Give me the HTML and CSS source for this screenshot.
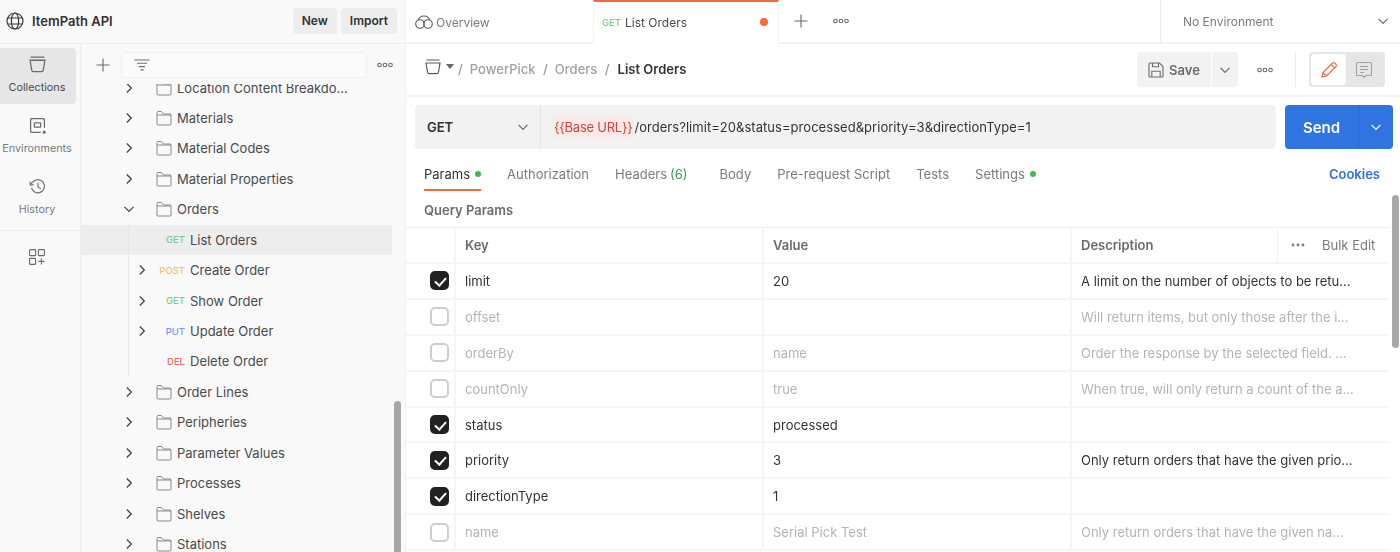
FILE: index.html
```html
<!DOCTYPE html>
<html lang="en">
  <head>
    <meta charset="UTF-8" />
    <title>List Orders</title>
    <link rel="stylesheet" href="styles.css">
  </head>
  <body>
    <svg class="icon-defs" width="0" height="0">
      <symbol id="i-folder" viewBox="0 0 16 16" fill="none" stroke="currentColor">
        <path d="M1 14V2.500A1 1 0 0 1 2 1.500h3.500L7.500 4H14a1 1 0 0 1 1 1v9a1 1 0 0 1-1 1H2a1 1 0 0 1-1-1zM1 5h14"/>
      </symbol>
      <symbol id="i-right" viewBox="0 0 14 14" fill="none" stroke="currentColor" stroke-width="1.300">
        <path d="M4.800 2.500 9.300 7l-4.500 4.500"/>
      </symbol>
      <symbol id="i-down" viewBox="0 0 14 14" fill="none" stroke="currentColor" stroke-width="1.200">
        <path d="M2.500 4.800 7 9.300l4.500-4.500"/>
      </symbol>
      <symbol id="i-more" viewBox="0 0 16 6" fill="none" stroke="currentColor" stroke-width="1.100">
        <circle cx="2.500" cy="3" r="1.800"/><circle cx="8" cy="3" r="1.800"/><circle cx="13.500" cy="3" r="1.800"/>
      </symbol>
      <symbol id="i-plus" viewBox="0 0 14 14" fill="none" stroke="currentColor" stroke-width="1.100">
        <path d="M7 .5v13M.5 7h13"/>
      </symbol>
      <symbol id="i-bucket" viewBox="0 0 16 16" fill="none" stroke="currentColor" stroke-width="1.200">
        <path d="M1.500 1h13M1 4h14l-1.600 9.500a1.500 1.500 0 0 1-1.500 1.200H4.100a1.500 1.500 0 0 1-1.500-1.200z"/>
      </symbol>
    </svg>

    <div class="app">
      <aside class="sidebar">
        <header class="workspace">
          <svg class="workspace-globe" viewBox="0 0 18 18" fill="none" stroke="currentColor" stroke-width="1.200">
            <circle cx="9" cy="9" r="8"/>
            <ellipse cx="9" cy="9" rx="3.600" ry="8"/>
            <path d="M1.700 6h14.600M1.700 12h14.600"/>
          </svg>
          <span class="workspace-name">ItemPath API</span>
          <button class="workspace-btn">New</button>
          <button class="workspace-btn">Import</button>
        </header>

        <div class="sidebar-body">
          <nav class="rail">
            <div class="rail-item active">
              <svg class="rail-icon" viewBox="0 0 16 16"><use href="#i-bucket"/></svg>
              <span>Collections</span>
            </div>
            <div class="rail-item">
              <svg class="rail-icon" viewBox="0 0 16 16" fill="none" stroke="currentColor" stroke-width="1.200">
                <path d="M14.500 10V2.500a1 1 0 0 0-1-1h-11a1 1 0 0 0-1 1v11a1 1 0 0 0 1 1H11"/>
                <rect x="5" y="5.500" width="6" height="4" rx=".5"/>
                <rect x="13" y="13" width="2.600" height="2.600" fill="currentColor" stroke="none"/>
              </svg>
              <span>Environments</span>
            </div>
            <div class="rail-item">
              <svg class="rail-icon" viewBox="0 0 18 18" fill="none" stroke="currentColor" stroke-width="1.200">
                <path d="M2.600 10.500A7 7 0 1 0 4 4.200L1.500 7"/>
                <path d="M1 3.800 1.500 7.500l3.600-.4"/>
                <path d="M9.500 5v4.500l3 2"/>
              </svg>
              <span>History</span>
            </div>
            <div class="rail-divider"></div>
            <svg class="rail-apps" viewBox="0 0 16 16" fill="none" stroke="currentColor" stroke-width="1.100">
              <rect x=".6" y=".6" width="6" height="6" rx=".6"/>
              <rect x="9.400" y=".6" width="6" height="6" rx=".6"/>
              <rect x=".6" y="9.400" width="6" height="6" rx=".6"/>
              <path d="M12.400 9.400v6M9.400 12.400h6"/>
            </svg>
          </nav>

          <section class="collections">
            <div class="collections-toolbar">
              <svg class="toolbar-plus"><use href="#i-plus"/></svg>
              <div class="filter-box">
                <svg class="filter-icon" viewBox="0 0 16 12" fill="none" stroke="currentColor" stroke-width="1.100">
                  <path d="M.5 1h15M3 4.300h10M5 7.600h6M6.500 10.900h3"/>
                </svg>
              </div>
              <svg class="more-icon"><use href="#i-more"/></svg>
            </div>

            <div class="tree-scroll">
              <ul class="tree">
                <li class="folder-row"><svg class="chev"><use href="#i-right"/></svg><svg class="folder"><use href="#i-folder"/></svg><span>Location Content Breakdo...</span></li>
                <li class="folder-row"><svg class="chev"><use href="#i-right"/></svg><svg class="folder"><use href="#i-folder"/></svg><span>Materials</span></li>
                <li class="folder-row"><svg class="chev"><use href="#i-right"/></svg><svg class="folder"><use href="#i-folder"/></svg><span>Material Codes</span></li>
                <li class="folder-row"><svg class="chev"><use href="#i-right"/></svg><svg class="folder"><use href="#i-folder"/></svg><span>Material Properties</span></li>
                <li class="folder-row"><svg class="chev"><use href="#i-down"/></svg><svg class="folder"><use href="#i-folder"/></svg><span>Orders</span></li>
                <li>
                  <ul class="tree-group">
                    <li class="request-row selected"><span class="chev-slot"></span><span class="method get">GET</span><span>List Orders</span></li>
                    <li class="request-row"><svg class="chev"><use href="#i-right"/></svg><span class="method post">POST</span><span>Create Order</span></li>
                    <li class="request-row"><svg class="chev"><use href="#i-right"/></svg><span class="method get">GET</span><span>Show Order</span></li>
                    <li class="request-row"><svg class="chev"><use href="#i-right"/></svg><span class="method put">PUT</span><span>Update Order</span></li>
                    <li class="request-row"><span class="chev-slot"></span><span class="method del">DEL</span><span>Delete Order</span></li>
                  </ul>
                </li>
                <li class="folder-row"><svg class="chev"><use href="#i-right"/></svg><svg class="folder"><use href="#i-folder"/></svg><span>Order Lines</span></li>
                <li class="folder-row"><svg class="chev"><use href="#i-right"/></svg><svg class="folder"><use href="#i-folder"/></svg><span>Peripheries</span></li>
                <li class="folder-row"><svg class="chev"><use href="#i-right"/></svg><svg class="folder"><use href="#i-folder"/></svg><span>Parameter Values</span></li>
                <li class="folder-row"><svg class="chev"><use href="#i-right"/></svg><svg class="folder"><use href="#i-folder"/></svg><span>Processes</span></li>
                <li class="folder-row"><svg class="chev"><use href="#i-right"/></svg><svg class="folder"><use href="#i-folder"/></svg><span>Shelves</span></li>
                <li class="folder-row"><svg class="chev"><use href="#i-right"/></svg><svg class="folder"><use href="#i-folder"/></svg><span>Stations</span></li>
              </ul>
              <div class="tree-scrollbar"></div>
            </div>
          </section>
        </div>
      </aside>

      <main class="main">
        <div class="tabbar">
          <div class="tab overview">
            <svg class="overview-icon" viewBox="0 0 18 14" fill="none" stroke="currentColor" stroke-width="1.100">
              <circle cx="5" cy="9" r="4.300"/>
              <circle cx="13" cy="9" r="4.300"/>
              <path d="M3.300 5.200A5.800 5.800 0 0 1 9 1a5.800 5.800 0 0 1 5.700 4.200"/>
            </svg>
            <span>Overview</span>
          </div>
          <div class="tab current">
            <span class="method get">GET</span>
            <span class="tab-title">List Orders</span>
            <span class="tab-dot"></span>
          </div>
          <svg class="tabbar-plus"><use href="#i-plus"/></svg>
          <svg class="more-icon tabbar-more"><use href="#i-more"/></svg>
          <div class="env-select">
            <span>No Environment</span>
            <svg class="small-chev"><use href="#i-down"/></svg>
          </div>
        </div>

        <div class="request-head">
          <div class="crumbs">
            <svg class="crumb-bucket" viewBox="0 0 16 16"><use href="#i-bucket"/></svg>
            <span class="crumb-caret"></span>
            <span class="crumb-sep">/</span>
            <span class="crumb">PowerPick</span>
            <span class="crumb-sep">/</span>
            <span class="crumb">Orders</span>
            <span class="crumb-sep">/</span>
            <span class="crumb-current">List Orders</span>
          </div>

          <div class="head-actions">
            <button class="save-btn">
              <svg viewBox="0 0 16 16" fill="none" stroke="currentColor" stroke-width="1.100">
                <path d="M1 2.200A1.200 1.200 0 0 1 2.200 1h9.300L15 4.500v9.300a1.200 1.200 0 0 1-1.200 1.200H2.200A1.200 1.200 0 0 1 1 13.800z"/>
                <path d="M4.500 1v3.800h6V1M3.800 15V9.300h8.400V15"/>
              </svg>
              Save
            </button>
            <button class="save-menu"><svg class="small-chev"><use href="#i-down"/></svg></button>
            <svg class="more-icon head-more"><use href="#i-more"/></svg>
            <div class="head-divider"></div>
            <div class="mode-toggle">
              <div class="mode-btn on">
                <svg viewBox="0 0 18 18" fill="none" stroke="#f26b3a" stroke-width="1.100">
                  <path d="M2 16l1-4.500L12.500 2a1.500 1.500 0 0 1 2.100 0l1.400 1.400a1.500 1.500 0 0 1 0 2.100L6.500 15z"/>
                  <path d="M11 3.500 14.500 7M3 11.500 6.500 15"/>
                </svg>
              </div>
              <div class="mode-btn">
                <svg viewBox="0 0 18 18" fill="none" stroke="#a0a0a0" stroke-width="1.100">
                  <path d="M2.500 1.500h13a1 1 0 0 1 1 1v11a1 1 0 0 1-1 1H11l-2 2-2-2H2.500a1 1 0 0 1-1-1v-11a1 1 0 0 1 1-1z"/>
                  <path d="M5 5.500h8M5 8.500h8M5 11.500h4"/>
                </svg>
              </div>
            </div>
          </div>
        </div>

        <div class="url-row">
          <div class="url-box">
            <div class="url-method">
              <span>GET</span>
              <svg class="small-chev"><use href="#i-down"/></svg>
            </div>
            <div class="url-text"><span class="url-var">{{Base URL}}</span>/orders?limit=20&amp;status=processed&amp;priority=3&amp;directionType=1</div>
          </div>
          <div class="send-btn">
            <span class="send-label">Send</span>
            <span class="send-menu"><svg class="small-chev"><use href="#i-down"/></svg></span>
          </div>
        </div>

        <div class="req-tabs">
          <span class="req-tab active">Params<i class="status-dot"></i></span>
          <span class="req-tab">Authorization</span>
          <span class="req-tab">Headers <em>(6)</em></span>
          <span class="req-tab spaced">Body</span>
          <span class="req-tab">Pre-request Script</span>
          <span class="req-tab">Tests</span>
          <span class="req-tab">Settings<i class="status-dot"></i></span>
          <span class="cookies">Cookies</span>
        </div>

        <div class="query-title">Query Params</div>

        <div class="params">
          <div class="param-row header">
            <div class="cell"></div>
            <div class="cell">Key</div>
            <div class="cell">Value</div>
            <div class="cell desc-head">
              <span>Description</span>
              <div class="bulk">
                <svg viewBox="0 0 14 4" fill="currentColor"><circle cx="2" cy="2" r="1.400"/><circle cx="7" cy="2" r="1.400"/><circle cx="12" cy="2" r="1.400"/></svg>
                <span>Bulk Edit</span>
              </div>
            </div>
          </div>

          <div class="param-row">
            <div class="cell"><span class="check on"></span></div>
            <div class="cell">limit</div>
            <div class="cell">20</div>
            <div class="cell">A limit on the number of objects to be retu...</div>
          </div>
          <div class="param-row off">
            <div class="cell"><span class="check"></span></div>
            <div class="cell">offset</div>
            <div class="cell"></div>
            <div class="cell">Will return items, but only those after the i...</div>
          </div>
          <div class="param-row off">
            <div class="cell"><span class="check"></span></div>
            <div class="cell">orderBy</div>
            <div class="cell">name</div>
            <div class="cell">Order the response by the selected field. ...</div>
          </div>
          <div class="param-row off">
            <div class="cell"><span class="check"></span></div>
            <div class="cell">countOnly</div>
            <div class="cell">true</div>
            <div class="cell">When true, will only return a count of the a...</div>
          </div>
          <div class="param-row">
            <div class="cell"><span class="check on"></span></div>
            <div class="cell">status</div>
            <div class="cell">processed</div>
            <div class="cell"></div>
          </div>
          <div class="param-row">
            <div class="cell"><span class="check on"></span></div>
            <div class="cell">priority</div>
            <div class="cell">3</div>
            <div class="cell">Only return orders that have the given prio...</div>
          </div>
          <div class="param-row">
            <div class="cell"><span class="check on"></span></div>
            <div class="cell">directionType</div>
            <div class="cell">1</div>
            <div class="cell"></div>
          </div>
          <div class="param-row off">
            <div class="cell"><span class="check"></span></div>
            <div class="cell">name</div>
            <div class="cell">Serial Pick Test</div>
            <div class="cell">Only return orders that have the given na...</div>
          </div>
        </div>
        <div class="main-scrollbar"></div>
      </main>
    </div>
  </body>
</html>
```

FILE: styles.css
```css
* {
  box-sizing: border-box;
}

body {
  font-family: Inter, "Liberation Sans", sans-serif;
  font-size: 13px;
  margin: 0;
  width: 1400px;
  height: 552px;
  overflow: hidden;
  background-color: #ffffff;
  color: #212121;
}

ul {
  list-style: none;
  margin: 0;
  padding: 0;
}

button {
  font-family: inherit;
  border: none;
  cursor: pointer;
}

.icon-defs {
  position: absolute;
}

.app {
  display: flex;
  height: 552px;
  filter: blur(0.5px);
}

/* Left sidebar */

.sidebar {
  width: 406px;
  flex-shrink: 0;
  display: flex;
  flex-direction: column;
  background-color: #f9f9f9;
  border-right: 1px solid #f0f0f0;
}

.workspace {
  height: 44px;
  flex-shrink: 0;
  display: flex;
  align-items: center;
  gap: 4px;
  padding: 0 8px 2px 6px;
  border-bottom: 1px solid #eeeeee;
}

.workspace-globe {
  width: 18px;
  height: 18px;
  color: #3a3a3a;
  margin-right: 4px;
}

.workspace-name {
  font-weight: 600;
  color: #333333;
  margin-right: auto;
}

.workspace-btn {
  height: 26px;
  padding: 0 9px;
  border-radius: 4px;
  background-color: #ededed;
  color: #333333;
  font-size: 12px;
  font-weight: 600;
}

.sidebar-body {
  flex: 1;
  display: flex;
  min-height: 0;
}

.rail {
  width: 81px;
  flex-shrink: 0;
  padding: 4px 4px 0 0;
  border-right: 1px solid #eeeeee;
  display: flex;
  flex-direction: column;
  gap: 5px;
}

.rail-item {
  height: 56px;
  display: flex;
  flex-direction: column;
  align-items: center;
  justify-content: center;
  gap: 8px;
  padding: 0 2px 2px 0;
  font-size: 10.8px;
  color: #7a7a7a;
  border-radius: 0 4px 4px 0;
}

.rail-item.active {
  background-color: #e6e6e6;
  color: #4a4a4a;
}

.rail-icon {
  width: 17px;
  height: 17px;
  color: #6b6b6b;
}

.rail-divider {
  height: 1px;
  margin: -1px -4px 0 0;
  background-color: #eeeeee;
}

.rail-apps {
  width: 16px;
  height: 16px;
  margin: 13px 0 0 29px;
  color: #6b6b6b;
}

.collections {
  flex: 1;
  min-width: 0;
  display: flex;
  flex-direction: column;
}

.collections-toolbar {
  height: 40px;
  flex-shrink: 0;
  display: flex;
  align-items: center;
  padding: 2px 0 0 15px;
}

.toolbar-plus {
  width: 14px;
  height: 14px;
  color: #666666;
  margin-right: 11px;
}

.filter-box {
  width: 246px;
  height: 26px;
  display: flex;
  align-items: center;
  padding-left: 12px;
  background-color: #fbfbfb;
  border: 1px solid #f0f0f0;
  border-radius: 3px;
  margin-right: 10px;
}

.filter-icon {
  width: 16px;
  height: 14px;
  color: #6b6b6b;
}

.more-icon {
  width: 16px;
  height: 6px;
  color: #6b6b6b;
}

.tree-scroll {
  flex: 1;
  position: relative;
  overflow: hidden;
}

.tree {
  width: 311px;
  margin-top: -11.7px;
  color: #4a4a4a;
}

.folder-row,
.request-row {
  height: 30.45px;
  display: flex;
  align-items: center;
}

.folder-row {
  padding-left: 41px;
}

.request-row {
  padding-left: 54px;
}

.request-row.selected {
  background-color: #ededed;
}

.chev,
.chev-slot {
  width: 14px;
  height: 14px;
  flex-shrink: 0;
  color: #444444;
}

.folder {
  width: 16px;
  height: 16px;
  flex-shrink: 0;
  margin: 0 5px 0 20px;
  color: #8a8a8a;
}

.tree-group {
  position: relative;
}

.tree-group::before {
  content: "";
  position: absolute;
  left: 47px;
  top: 0;
  bottom: 0;
  width: 1px;
  background-color: #e6e6e6;
}

.method {
  font-size: 9.5px;
  font-weight: 500;
  text-align: right;
}

.request-row .method {
  width: 36px;
  margin-right: 5px;
}

.get {
  color: #7fcb8c;
}

.post {
  color: #f7c46c;
}

.put {
  color: #6f9ef2;
}

.del {
  color: #ee6a60;
}

.tree-scrollbar {
  position: absolute;
  right: 4px;
  top: 317px;
  bottom: 0;
  width: 7px;
  border-radius: 4px 4px 0 0;
  background-color: #a8a8a8;
}

/* Main area */

.main {
  flex: 1;
  min-width: 0;
  position: relative;
  display: flex;
  flex-direction: column;
}

.tabbar {
  height: 44px;
  flex-shrink: 0;
  display: flex;
  align-items: center;
  border-bottom: 2px solid #f2f2f2;
}

.tab {
  height: 44px;
  align-self: flex-start;
  display: flex;
  align-items: center;
}

.overview {
  width: 187px;
  padding-left: 9px;
  gap: 3px;
  color: #7a7a7a;
  font-size: 12px;
}

.overview-icon {
  width: 18px;
  height: 14px;
  color: #5a5a5a;
}

.current {
  width: 186px;
  padding: 0 9px 2px 8px;
  border-top: 2px solid #f26b3a;
  border-left: 1px solid #f2f2f2;
  border-right: 1px solid #f2f2f2;
  background-color: #ffffff;
  font-size: 12px;
  color: #4a4a4a;
}

.tab-title {
  margin-left: 4px;
}

.tab-dot {
  width: 8px;
  height: 8px;
  margin-left: auto;
  margin-right: 1px;
  border-radius: 50%;
  background-color: #f26b3a;
}

.tabbar-plus {
  width: 14px;
  height: 14px;
  margin-left: 15px;
  color: #666666;
}

.tabbar-more {
  margin-left: 25px;
}

.env-select {
  width: 240px;
  height: 42px;
  margin-left: auto;
  padding: 0 10px 0 22px;
  display: flex;
  align-items: center;
  justify-content: space-between;
  border-left: 1px solid #ededed;
  font-size: 12px;
  color: #7a7a7a;
}

.small-chev {
  width: 14px;
  height: 14px;
  color: #6b6b6b;
}

.request-head {
  height: 53px;
  flex-shrink: 0;
  display: flex;
  align-items: center;
  padding: 0 15px 0 19px;
  border-bottom: 2px solid #f2f2f2;
  font-weight: 500;
}

.crumbs {
  display: flex;
  align-items: center;
  margin-bottom: 2px;
}

.crumb-bucket {
  width: 16px;
  height: 16px;
  margin: 0 5px 3px 0;
  color: #5a5a5a;
}

.crumb-caret {
  width: 0;
  height: 0;
  border-left: 4px solid transparent;
  border-right: 4px solid transparent;
  border-top: 5px solid #666666;
  margin: 0 4px 5px 0;
}

.crumb-sep {
  color: #9a9a9a;
  margin-right: 7px;
}

.crumb {
  color: #a0a0a0;
  margin-right: 7.5px;
}

.crumb-current {
  color: #333333;
  font-weight: 600;
  margin-left: 1px;
}

.head-actions {
  margin-left: auto;
  display: flex;
  align-items: center;
}

.save-btn {
  width: 74px;
  height: 35px;
  display: flex;
  align-items: center;
  justify-content: center;
  gap: 5px;
  border-radius: 4px 0 0 4px;
  background-color: #f2f2f2;
  color: #6b6b6b;
  font-size: 13px;
  font-weight: 600;
}

.save-btn svg {
  width: 16px;
  height: 16px;
}

.save-menu {
  width: 26px;
  height: 35px;
  margin-left: 1px;
  padding: 0;
  display: flex;
  align-items: center;
  justify-content: center;
  border-radius: 0 4px 4px 0;
  background-color: #f2f2f2;
}

.head-more {
  margin-left: 19px;
}

.head-divider {
  width: 1px;
  height: 35px;
  margin: 0 13px 0 22px;
  background-color: #ededed;
}

.mode-toggle {
  width: 76px;
  height: 35px;
  padding: 2px;
  display: flex;
  border-radius: 4px;
  background-color: #e6e6e6;
}

.mode-btn {
  width: 35px;
  display: flex;
  align-items: center;
  justify-content: center;
  border-radius: 4px;
}

.mode-btn.on {
  background-color: #ffffff;
}

.mode-btn svg {
  width: 18px;
  height: 18px;
}

.url-row {
  height: 52px;
  flex-shrink: 0;
  display: flex;
  gap: 9px;
  padding: 8px 7px 0 9px;
}

.url-box {
  flex: 1;
  display: flex;
  border-radius: 4px;
  background-color: #f2f2f2;
}

.url-method {
  width: 126px;
  flex-shrink: 0;
  display: flex;
  align-items: center;
  justify-content: space-between;
  padding: 0 10px 0 12px;
  border-right: 1px solid #e4e4e4;
  font-weight: 600;
  color: #333333;
}

.url-text {
  padding-left: 12px;
  display: flex;
  align-items: center;
  letter-spacing: 0.04px;
  color: #333333;
}

.url-var {
  padding: 3px 1px;
  margin-right: 1px;
  letter-spacing: -0.25px;
  background-color: #fbeae8;
  color: #d2453a;
}

.send-btn {
  width: 108px;
  display: flex;
  border-radius: 4px;
  background-color: #2f74e0;
  color: #ffffff;
}

.send-label {
  flex: 1;
  display: flex;
  align-items: center;
  justify-content: center;
  font-size: 15px;
  font-weight: 600;
}

.send-menu {
  width: 35px;
  display: flex;
  align-items: center;
  justify-content: center;
  border-left: 1px solid #2a69cc;
}

.send-menu .small-chev {
  color: #ffffff;
}

.req-tabs {
  height: 42px;
  flex-shrink: 0;
  display: flex;
  align-items: center;
  gap: 26px;
  padding: 8px 20px 0 18px;
  color: #7a7a7a;
}

.req-tab {
  display: flex;
  align-items: center;
  gap: 3px;
  position: relative;
}

.req-tab em {
  font-style: normal;
  color: #3f9c55;
}

.req-tab.active {
  color: #333333;
}

.req-tab.active::after {
  content: "";
  position: absolute;
  left: 0;
  right: 0;
  bottom: -9px;
  height: 2px;
  background-color: #f26b3a;
}

.req-tab.spaced {
  margin-left: 6px;
}

.status-dot {
  width: 6px;
  height: 6px;
  margin-left: 2px;
  border-radius: 50%;
  background-color: #3fb950;
}

.cookies {
  margin-left: auto;
  color: #2f6fdb;
  font-weight: 600;
}

.query-title {
  height: 36px;
  flex-shrink: 0;
  padding: 11px 0 0 18px;
  color: #6b6b6b;
  font-weight: 600;
}

.params {
  width: 983px;
  border-top: 1px solid #f0f0f0;
}

.param-row {
  height: 35.9px;
  display: grid;
  grid-template-columns: 50px 308px 308px 317px;
  border-bottom: 2px solid #f5f5f5;
  color: #333333;
}

.param-row.header {
  height: 36px;
  color: #6b6b6b;
  font-weight: 600;
}

.cell {
  display: flex;
  align-items: center;
  padding-left: 9px;
  border-right: 2px solid #f5f5f5;
  white-space: nowrap;
  overflow: hidden;
}

.cell:first-child {
  padding-left: 24px;
}

.cell:last-child {
  border-right: none;
}

.param-row.off {
  color: #b4b4b4;
}

.desc-head {
  justify-content: space-between;
  padding-right: 0;
}

.bulk {
  width: 112px;
  height: 100%;
  display: flex;
  align-items: center;
  gap: 17px;
  padding-left: 13px;
  border-left: 1px solid #f0f0f0;
  color: #7a7a7a;
  font-weight: 400;
}

.bulk svg {
  width: 14px;
  height: 4px;
}

.check {
  width: 19px;
  height: 19px;
  border: 2px solid #cdcdcd;
  border-radius: 5px;
  display: block;
  position: relative;
}

.check.on {
  background-color: #212121;
  border-color: #212121;
}

.check.on::after {
  content: "";
  position: absolute;
  left: 5px;
  top: 1.500px;
  width: 5px;
  height: 9px;
  border: solid #ffffff;
  border-width: 0 2px 2px 0;
  transform: rotate(42deg);
}

.main-scrollbar {
  position: absolute;
  right: 1px;
  top: 195px;
  width: 7px;
  height: 153px;
  border-radius: 4px;
  background-color: #a8a8a8;
}
```
